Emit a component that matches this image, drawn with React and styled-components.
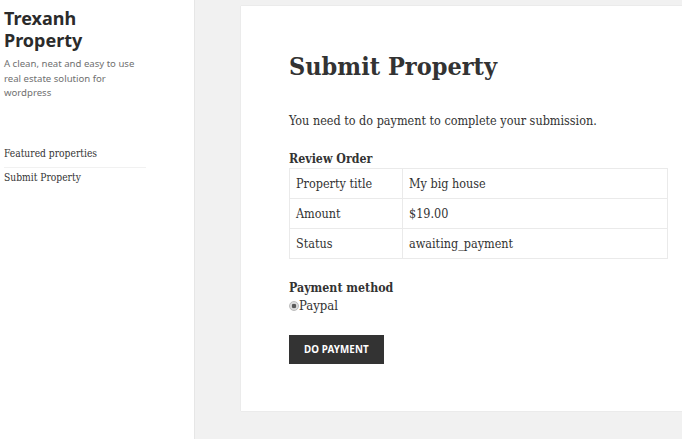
import React from "react";
import styled, { createGlobalStyle } from "styled-components";

const GlobalStyle = createGlobalStyle`
  html, body {
    margin: 0;
    padding: 0;
    background: #f1f1f1;
    overflow: hidden;
  }
  * {
    box-sizing: border-box;
  }
`;

const serif = `"DejaVu Serif Condensed", "DejaVu Serif", serif`;
const sans = `"Noto Sans", "Open Sans", sans-serif`;

const Page = styled.div`
  display: flex;
  align-items: flex-start;
  min-height: 100vh;
`;

const Sidebar = styled.aside`
  flex: 0 0 195px;
  min-height: 100vh;
  background: #fff;
  border-right: 1px solid #e6e6e6;
  padding: 7px 48px 0 4px;
`;

const SiteTitle = styled.h1`
  margin: 0;
  font-family: ${sans};
  font-weight: 700;
  font-size: 18px;
  line-height: 22px;
  color: #2b2b2b;
`;

const Tagline = styled.p`
  margin: 6px 0 0;
  font-family: ${sans};
  font-size: 9.6px;
  line-height: 14.5px;
  color: #707070;
`;

const Menu = styled.ul`
  list-style: none;
  margin: 43px 0 0;
  padding: 0;
`;

const MenuItem = styled.li`
  font-family: ${serif};
  font-size: 10.2px;
  line-height: 16px;
  color: #333;
  padding: 2px 0 5px;
  border-bottom: ${(p) => (p.$last ? "none" : "1px solid #f1f1f1")};
`;

const Main = styled.main`
  flex: 0 0 auto;
  padding: 6px 0 0 46px;
`;

const Card = styled.section`
  width: 475px;
  background: #fff;
  box-shadow: 0 0 1px rgba(0, 0, 0, 0.15);
  padding: 45px 48px 47px;
  font-family: ${serif};
  color: #333;
`;

const Title = styled.h2`
  margin: 0;
  font-size: 25px;
  line-height: 32px;
  font-weight: 700;
`;

const Lead = styled.p`
  margin: 28px 0 0;
  font-size: 12.5px;
  line-height: 20px;
`;

const SectionLabel = styled.h3`
  margin: ${(p) => p.$top}px 0 0;
  font-size: 12.3px;
  line-height: 18px;
  font-weight: 700;
`;

const OrderTable = styled.table`
  width: 100%;
  border-collapse: collapse;
  font-size: 12.5px;
`;

const Cell = styled.td`
  border: 1px solid #eaeaea;
  height: 30px;
  padding: 0 6px;
  width: ${(p) => (p.$label ? "113px" : "auto")};
`;

const RadioRow = styled.label`
  display: flex;
  align-items: center;
  gap: 0;
  font-size: 13px;
  line-height: 18px;
`;

const Radio = styled.span`
  width: 10px;
  height: 10px;
  border-radius: 50%;
  background: radial-gradient(circle, #5a5a5a 0 2px, #dcdcdc 2.6px);
  border: 1px solid #bdbdbd;
`;

const PayButton = styled.button`
  display: block;
  margin-top: 20px;
  height: 29px;
  padding: 0 15px;
  border: none;
  background: #333;
  color: #fff;
  font-family: ${sans};
  font-weight: 700;
  font-size: 9.8px;
  letter-spacing: 0.01em;
  text-transform: uppercase;
  cursor: pointer;
`;

const rows = [
  ["Property title", "My big house"],
  ["Amount", "$19.00"],
  ["Status", "awaiting_payment"],
];

export default function App() {
  return (
    <>
      <GlobalStyle />
      <Page>
        <Sidebar>
          <SiteTitle>Trexanh Property</SiteTitle>
          <Tagline>A clean, neat and easy to use real estate solution for wordpress</Tagline>
          <Menu>
            <MenuItem>Featured properties</MenuItem>
            <MenuItem $last>Submit Property</MenuItem>
          </Menu>
        </Sidebar>
        <Main>
          <Card>
            <Title>Submit Property</Title>
            <Lead>You need to do payment to complete your submission.</Lead>
            <SectionLabel $top={19}>Review Order</SectionLabel>
            <OrderTable>
              <tbody>
                {rows.map(([k, v]) => (
                  <tr key={k}>
                    <Cell $label>{k}</Cell>
                    <Cell>{v}</Cell>
                  </tr>
                ))}
              </tbody>
            </OrderTable>
            <SectionLabel $top={20}>Payment method</SectionLabel>
            <RadioRow>
              <Radio />
              Paypal
            </RadioRow>
            <PayButton>Do payment</PayButton>
          </Card>
        </Main>
      </Page>
    </>
  );
}
